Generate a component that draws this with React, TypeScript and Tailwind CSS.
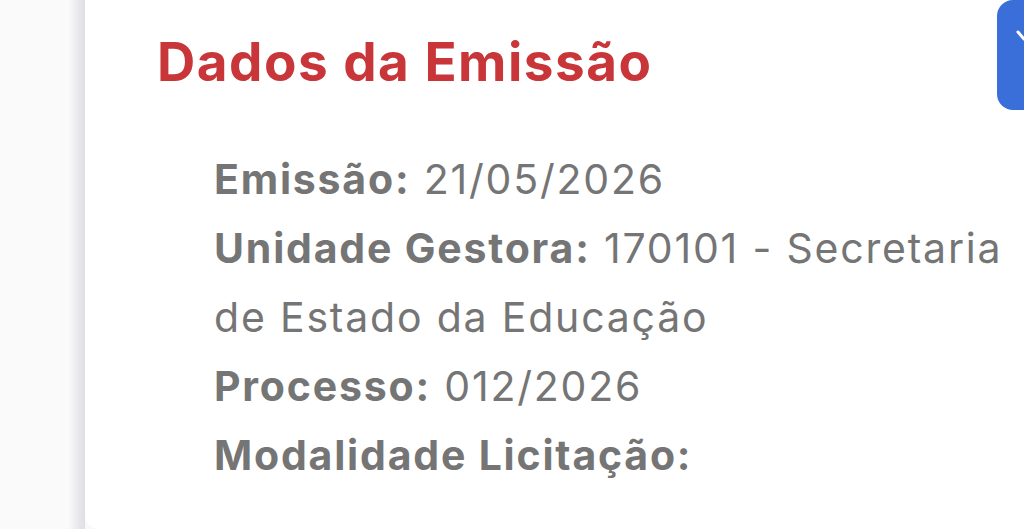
export default function App() {
  const rows: { label: string; value?: string }[] = [
    { label: "Emissão:", value: "21/05/2026" },
    { label: "Unidade Gestora:", value: "170101 - Secretaria de Estado da Educação" },
    { label: "Processo:", value: "012/2026" },
    { label: "Modalidade Licitação:" },
  ];
  return (
    <div
      className="relative flex h-[529px] w-[1024px] overflow-hidden bg-[#f8f8fa]"
      style={{ fontFamily: "Inter, Roboto, 'Liberation Sans', sans-serif" }}
    >
      <div className="w-[85px] shrink-0 bg-gradient-to-r from-[#fafafb] from-80% to-[#dedee3]" />
      <div className="flex-1 rounded-bl-[14px] bg-white pl-[72px] pt-[24px]">
        <h2 className="text-[53px] font-bold leading-[76px] tracking-[1.5px] text-[#c8363a]">
          Dados da Emissão
        </h2>
        <div className="mt-[45px] pl-[57px] pr-[6px] text-[41px] leading-[69px] tracking-[1.8px] text-[#757575]">
          {rows.map((r) => (
            <p key={r.label}>
              <span className="font-bold">{r.label}</span>
              {r.value ? <span> {r.value}</span> : null}
            </p>
          ))}
        </div>
      </div>
      <button className="absolute right-[-30px] top-0 flex h-[110px] w-[57px] items-start justify-start rounded-[16px] bg-[#3a6fd9] pl-[19px] pt-[30px]">
        <svg width="16" height="12" viewBox="0 0 16 12" fill="none">
          <path d="M2 2l6 7 6-7" stroke="white" strokeWidth="3" strokeLinecap="round" strokeLinejoin="round" />
        </svg>
      </button>
    </div>
  );
}
